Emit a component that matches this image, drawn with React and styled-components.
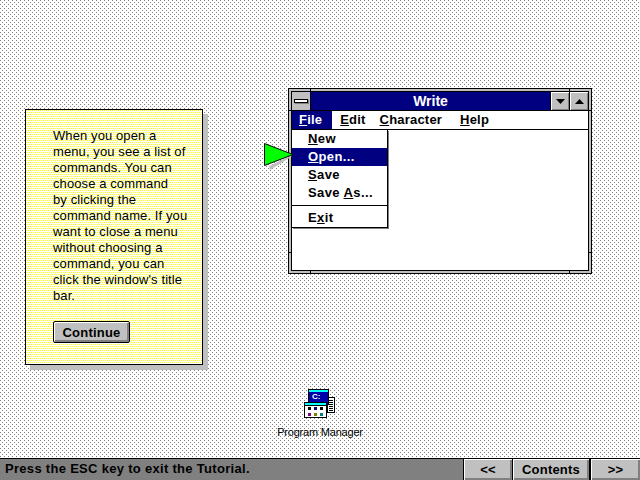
import React from 'react'
import styled, { createGlobalStyle } from 'styled-components'

const GlobalStyle = createGlobalStyle`
  html, body {
    margin: 0;
    padding: 0;
    width: 640px;
    height: 480px;
    overflow: hidden;
  }
`

// two staggered squares in one tile, kept crisp so the dither stays on whole pixels
const dither = (color, w, h, dot) => {
  const svg = `<svg xmlns='http://www.w3.org/2000/svg' width='${w}' height='${h}' shape-rendering='crispEdges'><rect width='${dot}' height='${dot}' fill='${color}'/><rect x='${w / 2}' y='${h / 2}' width='${dot}' height='${dot}' fill='${color}'/></svg>`
  return `url("data:image/svg+xml,${svg.replace(/#/g, '%23')}")`
}

const UI_FONT = '"Liberation Sans", Arial, sans-serif'

const Desktop = styled.div`
  width: 640px;
  height: 480px;
  display: flex;
  flex-direction: column;
  background-color: #fff;
  background-image: ${dither('#808080', 4, 4, 1)};
  font-family: ${UI_FONT};
`

const Stage = styled.div`
  flex: 1;
  display: grid;
  grid-template-columns: 288px 304px 48px;
  grid-template-rows: 88px 298px 1fr;
`

const LeftCol = styled.div`
  grid-row: 2;
  padding: 21px 0 0 25px;
`

const Note = styled.div`
  width: 178px;
  height: 256px;
  box-sizing: border-box;
  border: 1px solid #000;
  background-color: #fff;
  background-image: ${dither('#ffff00', 2, 4, 1)};
  box-shadow: 5px 5px 0 #c0c0c0;
  padding: 18px 0 0 27px;
  font-size: 13px;
  line-height: 16px;
  letter-spacing: 0.1px;
  color: #000;
`

const Continue = styled.button`
  display: block;
  margin-top: 17px;
  width: 77px;
  height: 22px;
  padding: 0;
  border: 1px solid #000;
  border-radius: 2px;
  background: #c0c0c0;
  box-shadow: inset 1px 1px 0 #fff, inset -2px -2px 0 #808080;
  font: bold 13px ${UI_FONT};
  letter-spacing: 0.2px;
  color: #000;
`

const RightCol = styled.div`
  grid-row: 2;
  grid-column: 2;
  position: relative;
`

const Window = styled.div`
  width: 304px;
  height: 186px;
  box-sizing: border-box;
  border: 1px solid #000;
  background: #c0c0c0;
  padding: 2px;
  display: flex;
  position: relative;
`

const TickV = styled.i`
  position: absolute;
  left: ${p => p.$x}px;
  ${p => p.$bottom ? 'bottom: 0;' : 'top: 0;'}
  width: 1px;
  height: 3px;
  background: #000;
`

const TickH = styled.i`
  position: absolute;
  top: ${p => p.$y}px;
  ${p => p.$right ? 'right: 0;' : 'left: 0;'}
  width: 3px;
  height: 1px;
  background: #000;
`

const Inner = styled.div`
  flex: 1;
  border: 1px solid #000;
  background: #fff;
  display: flex;
  flex-direction: column;
  position: relative;
`

const TitleBar = styled.div`
  height: 18px;
  display: flex;
  border-bottom: 1px solid #000;
`

const TitleButton = styled.div`
  width: 19px;
  height: 18px;
  box-sizing: border-box;
  background: #c0c0c0;
  display: flex;
  align-items: center;
  justify-content: center;
  border-left: ${p => (p.$edge ? '1px solid #000' : 'none')};
  border-right: ${p => (p.$system ? '1px solid #000' : 'none')};
  box-shadow: ${p => (p.$system ? 'none' : 'inset 1px 1px 0 #fff, inset -1px -1px 0 #808080')};
`

const SystemBar = styled.div`
  width: 12px;
  height: 2px;
  background: #fff;
  border: 1px solid #000;
  box-shadow: 1px 1px 0 #808080;
`

const Title = styled.div`
  flex: 1;
  background: #000080;
  color: #fff;
  font-size: 14px;
  font-weight: bold;
  line-height: 18px;
  text-align: center;
`

const MenuBar = styled.div`
  height: 18px;
  display: flex;
  border-bottom: 1px solid #000;
  font: bold 13px/18px ${UI_FONT};
  letter-spacing: 0.2px;
`

const MenuItem = styled.span`
  padding: 0 ${p => p.$right || 0}px 0 ${p => p.$left}px;
  background: ${p => (p.$active ? '#000080' : 'transparent')};
  color: ${p => (p.$active ? '#fff' : '#000')};
`

const Key = styled.span`
  text-decoration: underline;
`

const Dropdown = styled.div`
  position: absolute;
  left: 0;
  top: 38px;
  width: 96px;
  height: 98px;
  box-sizing: border-box;
  background: #fff;
  border: 1px solid #000;
  border-left: none;
  border-top: none;
  box-shadow: 1px 1px 0 #808080;
  font: bold 13px/18px ${UI_FONT};
  letter-spacing: 0.4px;
`

const DropItem = styled.div`
  height: 18px;
  padding-left: 16px;
  background: ${p => (p.$active ? '#000080' : 'transparent')};
  color: ${p => (p.$active ? '#fff' : '#000')};
`

const Divider = styled.div`
  height: 1px;
  background: #000;
  margin: 3px 0 3px;
`

const Pointer = styled.svg`
  position: absolute;
  left: -25px;
  top: 52px;
`

const IconRow = styled.div`
  grid-row: 3;
  grid-column: 1 / 4;
  display: flex;
  justify-content: center;
  padding-top: 2px;
`

const IconWrap = styled.div`
  display: flex;
  flex-direction: column;
  align-items: center;
  width: 100px;
`

const IconLabel = styled.div`
  font-size: 11px;
  line-height: 13px;
  margin-top: 6px;
  letter-spacing: -0.2px;
  color: #000;
  white-space: nowrap;
`

const StatusBar = styled.div`
  height: 22px;
  box-sizing: border-box;
  border-top: 1px solid #000;
  background: #808080;
  display: flex;
  align-items: stretch;
  padding-left: 5px;
`

const StatusText = styled.div`
  flex: 1;
  font: bold 13px/20px ${UI_FONT};
  letter-spacing: 0.3px;
  color: #000;
`

const NavGroup = styled.div`
  display: flex;
  gap: 1px;
  background: #000;
  border-left: 1px solid #000;
`

const NavButton = styled.button`
  width: ${p => p.$w}px;
  height: 21px;
  padding: 0;
  margin: 0 0 0 ${p => p.$gap || 0}px;
  border: none;
  background: #c0c0c0;
  box-shadow: inset 1px 1px 0 #fff, inset -2px -2px 0 #808080;
  font: bold 13px ${UI_FONT};
  letter-spacing: 0.2px;
  color: #000;
`

const IconCaption = styled.text`
  font: bold 8px ${UI_FONT};
  fill: #fff;
`

const ProgramIcon = () => (
  <svg width="32" height="32" viewBox="0 0 32 32" shapeRendering="crispEdges">
    <rect x="23.5" y="9.5" width="7" height="15" fill="#fff" stroke="#000" />
    <path d="M25 12h4M25 14h4M25 16h4M25 18h4M25 20h4M25 22h4" stroke="#000" />
    <rect x="4.5" y="1.5" width="20" height="15" fill="#0000a8" stroke="#000" />
    <rect x="5" y="2" width="19" height="2" fill="#00ffff" />
    <IconCaption x="8" y="11">C:</IconCaption>
    <rect x="0.5" y="14.5" width="22" height="15" fill="#fff" stroke="#000" />
    <rect x="1" y="15" width="21" height="2" fill="#00ffff" />
    <path d="M1 17.5h21" stroke="#000" />
    <rect x="4" y="19" width="3" height="3" fill="#000" />
    <rect x="10" y="19" width="3" height="3" fill="#000080" />
    <rect x="16" y="19" width="3" height="3" fill="#000" />
    <rect x="4" y="25" width="3" height="3" fill="#800080" />
    <rect x="10" y="25" width="3" height="3" fill="#808000" />
    <rect x="16" y="25" width="3" height="3" fill="#008080" />
  </svg>
)

const App = () => (
  <Desktop>
    <GlobalStyle />
    <Stage>
      <LeftCol>
        <Note>
          When you open a<br />
          menu, you see a list of<br />
          commands. You can<br />
          choose a command<br />
          by clicking the<br />
          command name. If you<br />
          want to close a menu<br />
          without choosing a<br />
          command, you can<br />
          click the window's title<br />
          bar.
          <Continue>Continue</Continue>
        </Note>
      </LeftCol>
      <RightCol>
        <Window>
          <TickV $x={21} />
          <TickV $x={280} />
          <TickV $x={21} $bottom />
          <TickV $x={280} $bottom />
          <TickH $y={21} />
          <TickH $y={21} $right />
          <TickH $y={163} />
          <TickH $y={163} $right />
          <Inner>
            <TitleBar>
              <TitleButton $system><SystemBar /></TitleButton>
              <Title>Write</Title>
              <TitleButton $edge>
                <svg width="9" height="5" viewBox="0 0 9 5"><path d="M0 0h9L4.5 5z" fill="#000" /></svg>
              </TitleButton>
              <TitleButton $edge>
                <svg width="9" height="5" viewBox="0 0 9 5"><path d="M0 5h9L4.5 0z" fill="#000" /></svg>
              </TitleButton>
            </TitleBar>
            <MenuBar>
              <MenuItem $active $left={7} $right={10}><Key>F</Key>ile</MenuItem>
              <MenuItem $left={8}><Key>E</Key>dit</MenuItem>
              <MenuItem $left={14}><Key>C</Key>haracter</MenuItem>
              <MenuItem $left={18}><Key>H</Key>elp</MenuItem>
            </MenuBar>
            <Dropdown>
              <DropItem><Key>N</Key>ew</DropItem>
              <DropItem $active><Key>O</Key>pen...</DropItem>
              <DropItem><Key>S</Key>ave</DropItem>
              <DropItem>Save <Key>A</Key>s...</DropItem>
              <Divider />
              <DropItem>E<Key>x</Key>it</DropItem>
            </Dropdown>
          </Inner>
          <Pointer width="30" height="30" viewBox="0 0 30 30">
            <path d="M5 25L28 14L27 16L6 29z" fill="#c0c0c0" />
            <path d="M0.5 2.5v22L29 13.5z" fill="#00ff00" stroke="#000" />
          </Pointer>
        </Window>
      </RightCol>
      <IconRow>
        <IconWrap>
          <ProgramIcon />
          <IconLabel>Program Manager</IconLabel>
        </IconWrap>
      </IconRow>
    </Stage>
    <StatusBar>
      <StatusText>Press the ESC key to exit the Tutorial.</StatusText>
      <NavGroup>
        <NavButton $w={48}>&lt;&lt;</NavButton>
        <NavButton $w={76}>Contents</NavButton>
        <NavButton $w={49} $gap={1}>&gt;&gt;</NavButton>
      </NavGroup>
    </StatusBar>
  </Desktop>
)

export default App
